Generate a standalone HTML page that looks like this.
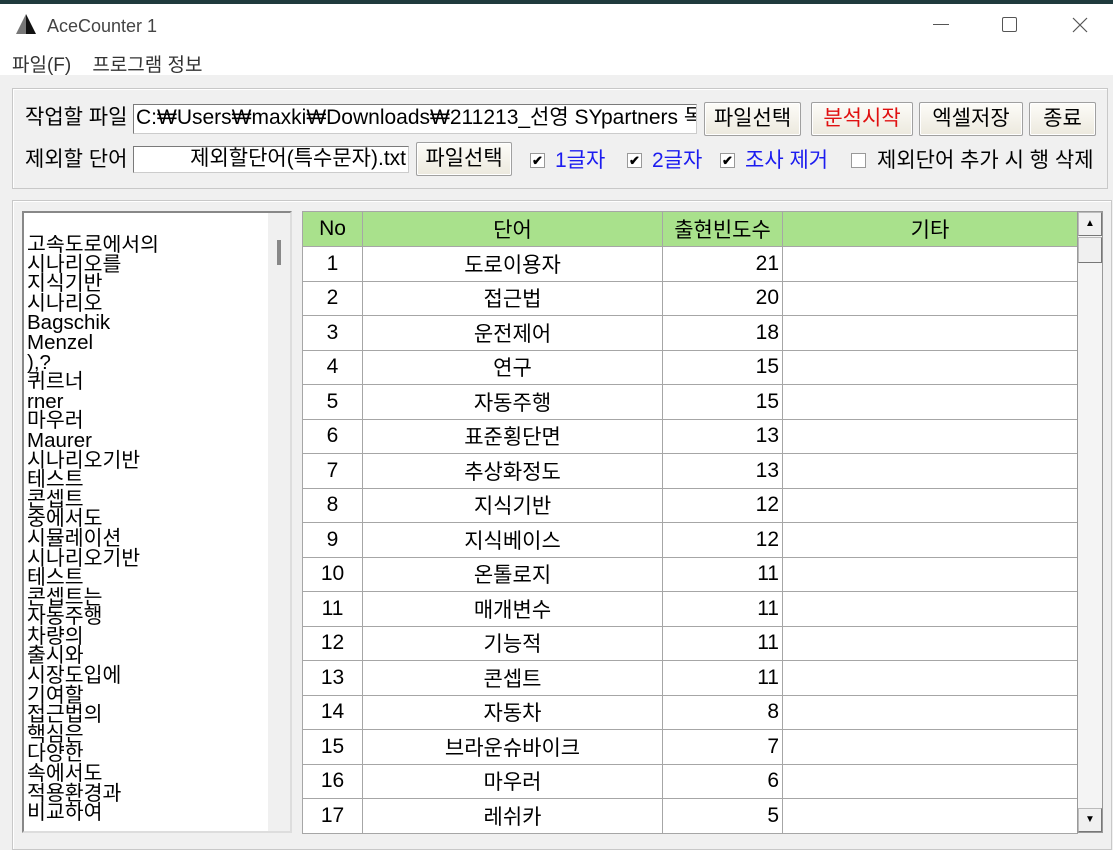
<!DOCTYPE html>
<html><head><meta charset="utf-8"><style>
*{box-sizing:border-box;margin:0;padding:0}
body{width:1113px;height:843px;overflow:hidden;background:#f0f0f0;font-family:"Liberation Sans","Noto Sans CJK KR","NanumGothic",sans-serif;position:relative;color:#000}
.a{position:absolute}
.t{font-size:21px;white-space:nowrap;line-height:22px}
.btn{position:absolute;border:1px solid #a0a0a0;border-radius:2px;background:linear-gradient(#fdfcf8,#ece9de);font-size:21px;text-align:center;box-shadow:inset 0 0 0 1px #fff;white-space:nowrap}
.inp{position:absolute;background:#fff;border:1px solid #7a7a7a;border-right-color:#ccc;border-bottom-color:#ccc;font-size:21px;white-space:nowrap;overflow:hidden;line-height:26px;padding-left:2px}
.cb{position:absolute;width:15px;height:15px;border:1px solid #999;background:#fff;font-size:13px;line-height:13px;text-align:center;font-weight:bold}
table{position:absolute;left:302px;top:211px;border-collapse:collapse;font-size:21px}
td{border:1px solid #a6a6a6;height:34.5px;background:#fff;text-align:center;padding:0}
th{border:1px solid #a6a6a6;height:35px;background:#a9e18c;font-weight:normal;padding:0}
td.r{text-align:right;padding-right:3px}
</style></head><body>
<div class="a" style="left:0;top:0;width:1113px;height:75px;background:#fff"></div>
<div class="a" style="left:0;top:0;width:1113px;height:4px;background:#1f3a3d"></div>
<svg class="a" style="left:14px;top:13px" width="24" height="22"><polygon points="12,1 2,21 12,21" fill="#777"/><polygon points="12,1 12,21 22,21" fill="#111"/></svg>
<div class="a" style="left:47px;top:16px;font-size:18px;color:#444">AceCounter 1</div>
<div class="a" style="left:933px;top:24px;width:16px;height:1px;background:#555"></div>
<div class="a" style="left:1002px;top:17px;width:15px;height:15px;border:1px solid #555;border-radius:2px"></div>
<svg class="a" style="left:1072px;top:17px" width="16" height="16"><path d="M1 1L15 15M15 1L1 15" stroke="#555" stroke-width="1.2"/></svg>
<div class="a" style="left:12px;top:50px;color:#333;font-size:19px;white-space:nowrap">파일(F)&nbsp;&nbsp;&nbsp;&nbsp;프로그램 정보</div>

<div class="a" style="left:12px;top:88px;width:1096px;height:101px;border:1px solid #c8c8c8;box-shadow:inset 1px 1px 0 #fff"></div>
<div class="a t" style="left:25px;top:107px">작업할 파일</div>
<div class="inp" style="left:133px;top:104px;width:564px;height:30px">C:₩Users₩maxki₩Downloads₩211213_선영 SYpartners 독</div>
<div class="btn" style="left:704px;top:102px;width:97px;height:34px;line-height:31px">파일선택</div>
<div class="btn" style="left:811px;top:102px;width:102px;height:34px;line-height:31px;color:#e01010">분석시작</div>
<div class="btn" style="left:919px;top:102px;width:104px;height:34px;line-height:31px">엑셀저장</div>
<div class="btn" style="left:1029px;top:102px;width:67px;height:34px;line-height:31px">종료</div>
<div class="a t" style="left:25px;top:149px">제외할 단어</div>
<div class="inp" style="left:133px;top:146px;width:276px;height:27px;text-align:right;padding-right:2px;line-height:24px">제외할단어(특수문자).txt</div>
<div class="btn" style="left:416px;top:142px;width:96px;height:34px;line-height:31px">파일선택</div>
<div class="cb" style="left:530px;top:153px">✔</div><div class="a t" style="left:555px;top:150px;color:#1c1cf0">1글자</div>
<div class="cb" style="left:627px;top:153px">✔</div><div class="a t" style="left:652px;top:150px;color:#1c1cf0">2글자</div>
<div class="cb" style="left:720px;top:153px">✔</div><div class="a t" style="left:745px;top:150px;color:#1c1cf0">조사 제거</div>
<div class="cb" style="left:851px;top:153px"></div><div class="a t" style="left:877px;top:150px">제외단어 추가 시 행 삭제</div>

<div class="a" style="left:12px;top:200px;width:1100px;height:650px;border:1px solid #c8c8c8;box-shadow:inset 1px 1px 0 #fff"></div>
<div class="a" style="left:22px;top:211px;width:270px;height:622px;background:#fff;border:2px solid #888;border-right-color:#ddd;border-bottom-color:#ddd"></div>
<div class="a" style="left:268px;top:213px;width:22px;height:618px;background:#f0f0f0"></div>
<div class="a" style="left:277px;top:240px;width:4px;height:25px;background:#888"></div>
<div class="a" style="left:27px;top:235px;font-size:20.5px;line-height:19.6px;width:240px;height:596px;overflow:hidden;white-space:nowrap">고속도로에서의<br>시나리오를<br>지식기반<br>시나리오<br>Bagschik<br>Menzel<br>),?<br>퀴르너<br>rner<br>마우러<br>Maurer<br>시나리오기반<br>테스트<br>콘셉트<br>중에서도<br>시뮬레이션<br>시나리오기반<br>테스트<br>콘셉트는<br>자동주행<br>차량의<br>출시와<br>시장도입에<br>기여할<br>접근법의<br>핵심은<br>다양한<br>속에서도<br>적용환경과<br>비교하여</div>

<table>
<tr><th style="width:60px">No</th><th style="width:300px">단어</th><th style="width:120px">출현빈도수</th><th style="width:295px">기타</th></tr>
<tr><td>1</td><td>도로이용자</td><td class="r">21</td><td></td></tr>
<tr><td>2</td><td>접근법</td><td class="r">20</td><td></td></tr>
<tr><td>3</td><td>운전제어</td><td class="r">18</td><td></td></tr>
<tr><td>4</td><td>연구</td><td class="r">15</td><td></td></tr>
<tr><td>5</td><td>자동주행</td><td class="r">15</td><td></td></tr>
<tr><td>6</td><td>표준횡단면</td><td class="r">13</td><td></td></tr>
<tr><td>7</td><td>추상화정도</td><td class="r">13</td><td></td></tr>
<tr><td>8</td><td>지식기반</td><td class="r">12</td><td></td></tr>
<tr><td>9</td><td>지식베이스</td><td class="r">12</td><td></td></tr>
<tr><td>10</td><td>온톨로지</td><td class="r">11</td><td></td></tr>
<tr><td>11</td><td>매개변수</td><td class="r">11</td><td></td></tr>
<tr><td>12</td><td>기능적</td><td class="r">11</td><td></td></tr>
<tr><td>13</td><td>콘셉트</td><td class="r">11</td><td></td></tr>
<tr><td>14</td><td>자동차</td><td class="r">8</td><td></td></tr>
<tr><td>15</td><td>브라운슈바이크</td><td class="r">7</td><td></td></tr>
<tr><td>16</td><td>마우러</td><td class="r">6</td><td></td></tr>
<tr><td>17</td><td>레쉬카</td><td class="r">5</td><td></td></tr>
</table>
<div class="a" style="left:1077px;top:211px;width:26px;height:622px;background:#f4f4f4;border:1px solid #999"></div>
<div class="a" style="left:1078px;top:212px;width:24px;height:24px;background:#f0f0f0;border:1px solid #bbb;border-right-color:#777;border-bottom-color:#777;font-size:10px;text-align:center;line-height:22px">▲</div>
<div class="a" style="left:1078px;top:237px;width:24px;height:26px;background:#f0f0f0;border:1px solid #bbb;border-right-color:#777;border-bottom-color:#777"></div>
<div class="a" style="left:1078px;top:808px;width:24px;height:24px;background:#f0f0f0;border:1px solid #bbb;border-right-color:#777;border-bottom-color:#777;font-size:10px;text-align:center;line-height:22px">▼</div>
</body></html>
